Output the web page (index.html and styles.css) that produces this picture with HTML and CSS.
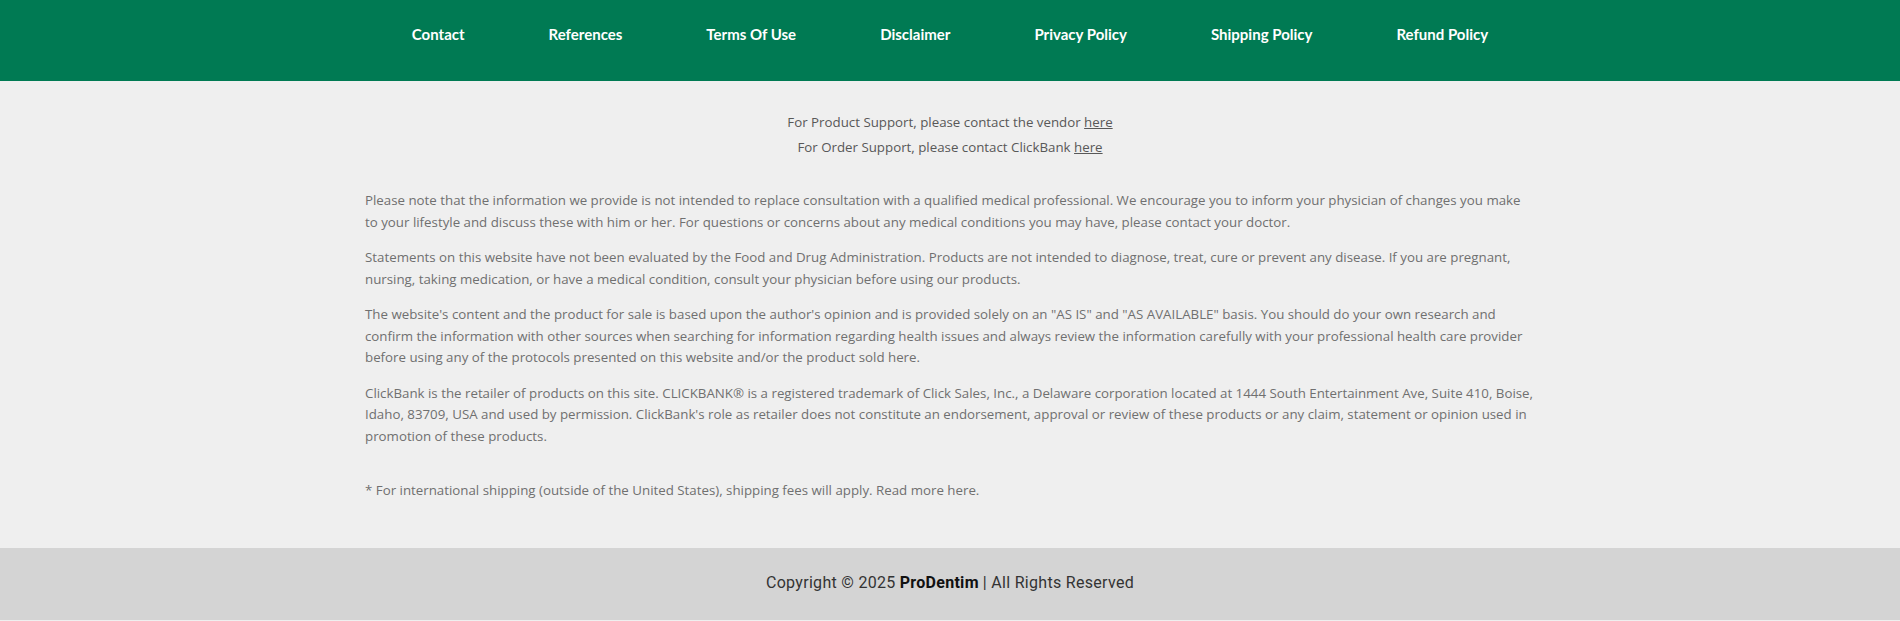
FILE: index.html
```html
<!DOCTYPE html>
<html lang="en">
<head>
  <meta charset="UTF-8" />
  <meta name="viewport" content="width=device-width, initial-scale=1.0" />
  <title>ProDentim</title>
  <link rel="stylesheet" href="styles.css">
</head>
<body>
  <nav class="top-nav">
    <a href="#">Contact</a>
    <a href="#">References</a>
    <a href="#">Terms Of Use</a>
    <a href="#">Disclaimer</a>
    <a href="#">Privacy Policy</a>
    <a href="#">Shipping Policy</a>
    <a href="#">Refund Policy</a>
  </nav>

  <main class="content">
    <div class="support">
      <p>For Product Support, please contact the vendor <a href="#">here</a></p>
      <p>For Order Support, please contact ClickBank <a href="#">here</a></p>
    </div>

    <div class="disclaimer">
      <p>Please note that the information we provide is not intended to replace consultation with a qualified medical professional. We encourage you to inform your physician of changes you make to your lifestyle and discuss these with him or her. For questions or concerns about any medical conditions you may have, please contact your doctor.</p>
      <p>Statements on this website have not been evaluated by the Food and Drug Administration. Products are not intended to diagnose, treat, cure or prevent any disease. If you are pregnant, nursing, taking medication, or have a medical condition, consult your physician before using our products.</p>
      <p>The website's content and the product for sale is based upon the author's opinion and is provided solely on an "AS IS" and "AS AVAILABLE" basis. You should do your own research and confirm the information with other sources when searching for information regarding health issues and always review the information carefully with your professional health care provider before using any of the protocols presented on this website and/or the product sold here.</p>
      <p>ClickBank is the retailer of products on this site. CLICKBANK® is a registered trademark of Click Sales, Inc., a Delaware corporation located at 1444 South Entertainment Ave, Suite 410, Boise, Idaho, 83709, USA and used by permission. ClickBank's role as retailer does not constitute an endorsement, approval or review of these products or any claim, statement or opinion used in promotion of these products.</p>
    </div>

    <p class="shipping-note">* For international shipping (outside of the United States), shipping fees will apply. Read more here.</p>
  </main>

  <footer class="site-footer">
    Copyright © 2025 <strong>ProDentim</strong> | All Rights Reserved
  </footer>
</body>
</html>
```

FILE: styles.css
```css
html, body {
  margin: 0;
  padding: 0;
  background: #efefef;
  font-family: "Open Sans", Lato, sans-serif;
}
.top-nav {
  background: #007a53;
  height: 81px;
  display: flex;
  justify-content: center;
  align-items: center;
  gap: 84px;
  padding-bottom: 14px;
  box-sizing: border-box;
}
.top-nav a {
  color: #fff;
  font-family: Lato, sans-serif;
  font-weight: 700;
  font-size: 15px;
  text-decoration: none;
}
.content {
  width: 1170px;
  margin: 0 auto;
  padding: 29px 0 47px;
}
.support {
  text-align: center;
  margin-bottom: 30px;
}
.support p {
  margin: 0;
  font-size: 13.3px;
  line-height: 25px;
  color: #585858;
}
.support a {
  color: #585858;
}
.disclaimer p {
  margin: 0 0 14px;
  font-size: 13.3px;
  line-height: 21.5px;
  color: #707070;
}
.disclaimer p:last-child {
  margin-bottom: 0;
}
.shipping-note {
  margin: 32px 0 0;
  font-size: 13.3px;
  line-height: 22px;
  color: #707070;
}
.site-footer {
  background: #d4d4d4;
  height: 72px;
  display: flex;
  justify-content: center;
  align-items: center;
  padding-bottom: 3px;
  box-sizing: border-box;
  font-family: Roboto, sans-serif;
  font-size: 16px;
  letter-spacing: 0.3px;
  color: #333;
}
.site-footer strong {
  color: #111;
  font-weight: 700;
  margin: 0 4px;
}
```
